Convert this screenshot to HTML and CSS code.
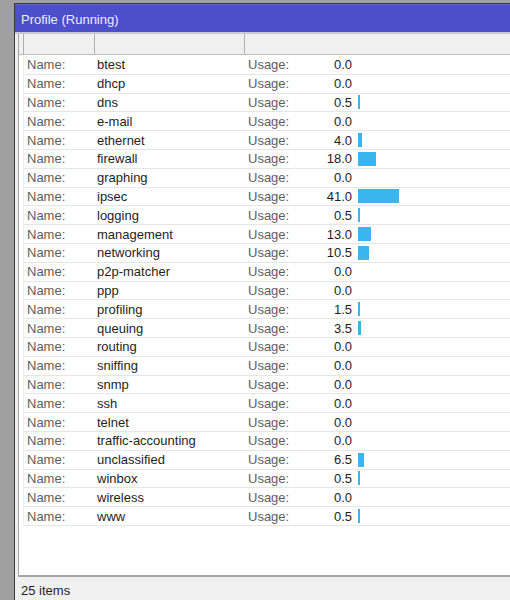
FILE: index.html
```html
<!DOCTYPE html>
<html>
<head>
<meta charset="utf-8">
<link rel="stylesheet" href="styles.css">
</head>
<body>
<div class="window">
  <div class="titlebar">Profile (Running)</div>
  <div class="content">
    <div class="table">
      <div class="thead">
        <div class="h h0"></div>
        <div class="h h1"></div>
        <div class="h h2"></div>
        <div class="h h3"></div>
      </div>
      <div class="tbody">
        <div class="row"><span class="lbl c1">Name:</span><span class="val c2">btest</span><span class="lbl c3">Usage:</span><span class="num">0.0</span></div>
        <div class="row"><span class="lbl c1">Name:</span><span class="val c2">dhcp</span><span class="lbl c3">Usage:</span><span class="num">0.0</span></div>
        <div class="row"><span class="lbl c1">Name:</span><span class="val c2">dns</span><span class="lbl c3">Usage:</span><span class="num">0.5</span><span class="bar" style="width:2px"></span></div>
        <div class="row"><span class="lbl c1">Name:</span><span class="val c2">e-mail</span><span class="lbl c3">Usage:</span><span class="num">0.0</span></div>
        <div class="row"><span class="lbl c1">Name:</span><span class="val c2">ethernet</span><span class="lbl c3">Usage:</span><span class="num">4.0</span><span class="bar" style="width:4px"></span></div>
        <div class="row"><span class="lbl c1">Name:</span><span class="val c2">firewall</span><span class="lbl c3">Usage:</span><span class="num">18.0</span><span class="bar" style="width:18px"></span></div>
        <div class="row"><span class="lbl c1">Name:</span><span class="val c2">graphing</span><span class="lbl c3">Usage:</span><span class="num">0.0</span></div>
        <div class="row"><span class="lbl c1">Name:</span><span class="val c2">ipsec</span><span class="lbl c3">Usage:</span><span class="num">41.0</span><span class="bar" style="width:41px"></span></div>
        <div class="row"><span class="lbl c1">Name:</span><span class="val c2">logging</span><span class="lbl c3">Usage:</span><span class="num">0.5</span><span class="bar" style="width:2px"></span></div>
        <div class="row"><span class="lbl c1">Name:</span><span class="val c2">management</span><span class="lbl c3">Usage:</span><span class="num">13.0</span><span class="bar" style="width:13px"></span></div>
        <div class="row"><span class="lbl c1">Name:</span><span class="val c2">networking</span><span class="lbl c3">Usage:</span><span class="num">10.5</span><span class="bar" style="width:10.5px"></span></div>
        <div class="row"><span class="lbl c1">Name:</span><span class="val c2">p2p-matcher</span><span class="lbl c3">Usage:</span><span class="num">0.0</span></div>
        <div class="row"><span class="lbl c1">Name:</span><span class="val c2">ppp</span><span class="lbl c3">Usage:</span><span class="num">0.0</span></div>
        <div class="row"><span class="lbl c1">Name:</span><span class="val c2">profiling</span><span class="lbl c3">Usage:</span><span class="num">1.5</span><span class="bar" style="width:2px"></span></div>
        <div class="row"><span class="lbl c1">Name:</span><span class="val c2">queuing</span><span class="lbl c3">Usage:</span><span class="num">3.5</span><span class="bar" style="width:3px"></span></div>
        <div class="row"><span class="lbl c1">Name:</span><span class="val c2">routing</span><span class="lbl c3">Usage:</span><span class="num">0.0</span></div>
        <div class="row"><span class="lbl c1">Name:</span><span class="val c2">sniffing</span><span class="lbl c3">Usage:</span><span class="num">0.0</span></div>
        <div class="row"><span class="lbl c1">Name:</span><span class="val c2">snmp</span><span class="lbl c3">Usage:</span><span class="num">0.0</span></div>
        <div class="row"><span class="lbl c1">Name:</span><span class="val c2">ssh</span><span class="lbl c3">Usage:</span><span class="num">0.0</span></div>
        <div class="row"><span class="lbl c1">Name:</span><span class="val c2">telnet</span><span class="lbl c3">Usage:</span><span class="num">0.0</span></div>
        <div class="row"><span class="lbl c1">Name:</span><span class="val c2">traffic-accounting</span><span class="lbl c3">Usage:</span><span class="num">0.0</span></div>
        <div class="row"><span class="lbl c1">Name:</span><span class="val c2">unclassified</span><span class="lbl c3">Usage:</span><span class="num">6.5</span><span class="bar" style="width:6px"></span></div>
        <div class="row"><span class="lbl c1">Name:</span><span class="val c2">winbox</span><span class="lbl c3">Usage:</span><span class="num">0.5</span><span class="bar" style="width:2px"></span></div>
        <div class="row"><span class="lbl c1">Name:</span><span class="val c2">wireless</span><span class="lbl c3">Usage:</span><span class="num">0.0</span></div>
        <div class="row"><span class="lbl c1">Name:</span><span class="val c2">www</span><span class="lbl c3">Usage:</span><span class="num">0.5</span><span class="bar" style="width:2px"></span></div>
      </div>
    </div>
  </div>
  <div class="status">25 items</div>
</div>
</body>
</html>
```

FILE: styles.css
```css
html, body {
  margin: 0;
  padding: 0;
}
body {
  background: #a0a0a0;
  height: 600px;
  overflow: hidden;
  font-family: "Liberation Sans", Arial, sans-serif;
  font-size: 13px;
}
.window {
  margin: 3px 0 0 14px;
  border-top: 1px solid #3a3a3a;
  border-left: 1px solid #3a3a3a;
  background: #f0f0f0;
  height: 600px;
}
.titlebar {
  height: 30px;
  line-height: 30px;
  box-sizing: border-box;
  background: #4b4fc9;
  border-top: 1px solid #5a5ed4;
  border-bottom: 2px solid #c9c9d4;
  color: #ececfa;
  padding-left: 6px;
  overflow: hidden;
}
.content {
  padding-left: 3px;
}
.table {
  background: #ffffff;
  border-left: 1px solid #a4a4a4;
  border-bottom: 2px solid #a6a6a6;
}
.thead {
  display: flex;
  height: 20px;
  background: #f0f0f0;
  border-bottom: 1px solid #bcbcbc;
}
.h {
  border-right: 1px solid #b0b0b0;
}
.h0 { width: 4px; }
.h1 { width: 70px; }
.h2 { width: 149px; }
.h3 { flex: 1; border-right: none; }
.tbody {
  height: 520px;
  padding-top: 1px;
  box-sizing: border-box;
}
.row {
  display: flex;
  align-items: center;
  margin-left: 4px;
  height: 18.8px;
  box-sizing: border-box;
  border-left: 1px solid #f0f0f0;
  border-bottom: 1px solid #e6e6e6;
  white-space: nowrap;
}
.lbl {
  color: #5e5e5e;
}
.val {
  color: #1e1e1e;
}
.c1 {
  width: 67px;
  padding-left: 3px;
}
.c2 {
  width: 148px;
  padding-left: 3px;
}
.c3 {
  width: 60px;
  padding-left: 3px;
}
.num {
  width: 44px;
  text-align: right;
  color: #1e1e1e;
}
.bar {
  display: inline-block;
  height: 14px;
  margin-left: 6px;
  background: #3bb5ed;
}
.status {
  height: 24px;
  line-height: 24px;
  padding: 2px 0 0 6px;
  color: #1e1e1e;
}
```
